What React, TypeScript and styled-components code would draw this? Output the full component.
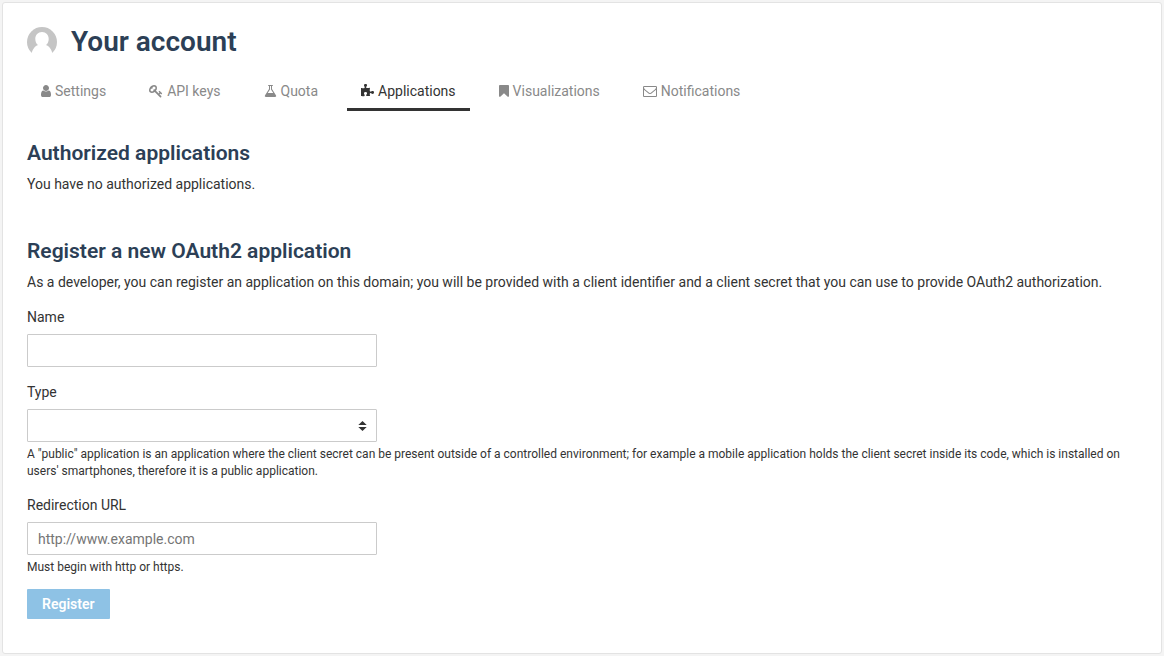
import React from 'react';
import styled, { createGlobalStyle, css } from 'styled-components';

const GlobalStyle = createGlobalStyle`
  *, *::before, *::after { box-sizing: border-box; }
  body {
    margin: 0;
    padding: 2px;
    background: #f4f4f4;
    color: #333;
    font-family: Roboto, "Liberation Sans", sans-serif;
    font-size: 14px;
    line-height: 20px;
  }
`;

const Card = styled.main`
  padding: 24px 24px 34px;
  background: #fff;
  border: 1px solid #e3e3e3;
  border-radius: 3px;
`;

const Header = styled.header`
  display: flex;
  align-items: center;
  gap: 14px;
`;

const Avatar = styled.svg`
  flex: none;
  width: 30px;
  height: 30px;
`;

const PageTitle = styled.h1`
  margin: 0;
  color: #2c3f56;
  font-size: 28px;
  font-weight: 600;
  line-height: 30px;
`;

const TabBar = styled.nav`
  display: flex;
  flex-wrap: wrap;
  gap: 15px;
  margin-top: 18px;
`;

const Tab = styled.a<{ $active?: boolean }>`
  display: flex;
  align-items: center;
  gap: 4px;
  padding: 6px 14px 7px;
  border-bottom: 3px solid ${(p) => (p.$active ? '#333' : 'transparent')};
  color: ${(p) => (p.$active ? '#333' : '#898989')};
  text-decoration: none;
`;

const Glyph = styled.svg`
  flex: none;
  height: 14px;
  fill: currentColor;
`;

const Section = styled.section`
  margin-top: 29px;

  & + & { margin-top: 44px; }
`;

const SectionTitle = styled.h2`
  margin: 0 0 8px;
  color: #2c3f56;
  font-size: 21px;
  font-weight: 600;
  line-height: 26px;
`;

const Text = styled.p`
  margin: 0;
`;

const Field = styled.div`
  margin-top: 15px;
`;

const Label = styled.label`
  display: block;
  margin-bottom: 7px;
`;

const control = css`
  display: block;
  width: 350px;
  max-width: 100%;
  height: 33px;
  padding: 0 10px;
  background: #fff;
  border: 1px solid #cbcbcb;
  border-radius: 1px;
  color: #333;
  font: inherit;
`;

const TextInput = styled.input`
  ${control}

  &::placeholder { color: #757575; opacity: 1; }
`;

const Select = styled.select`
  ${control}
  appearance: none;
`;

const SelectWrap = styled.div`
  position: relative;
  width: 350px;
  max-width: 100%;
`;

const SelectArrows = styled.svg`
  position: absolute;
  top: 12px;
  right: 10px;
  width: 9px;
  height: 10px;
  fill: #333;
  pointer-events: none;
`;

const Help = styled.p`
  margin: 4px 0 0;
  font-size: 12px;
  line-height: 17px;
`;

const Submit = styled.button`
  display: block;
  height: 30px;
  margin-top: 13px;
  padding: 0 15px;
  background: #8ec2e5;
  border: 0;
  border-radius: 1px;
  color: #fff;
  font: inherit;
  font-weight: 600;
`;

type TabItem = { label: string; width: number; box: string; path: string };

const tabs: TabItem[] = [
  {
    label: 'Settings',
    width: 10,
    box: '256 0 1280 1792',
    path: 'M1536 1399q0 109-62.5 187t-150.5 78h-854q-88 0-150.5-78t-62.5-187q0-85 8.5-160.5t31.5-152 58.5-131 94-89 134.5-34.5q131 128 313 128t313-128q76 0 134.5 34.5t94 89 58.5 131 31.5 152 8.5 160.5zm-256-887q0 159-112.5 271.5t-271.5 112.5-271.5-112.5-112.5-271.5 112.5-271.5 271.5-112.5 271.5 112.5 112.5 271.5z',
  },
  {
    label: 'API keys',
    width: 14,
    box: '0 0 1792 1792',
    path: 'M832 512q0-80-56-136t-136-56-136 56-56 136q0 42 19 83-41-19-83-19-80 0-136 56t-56 136 56 136 136 56 136-56 56-136q0-42-19-83 41 19 83 19 80 0 136-56t56-136zm851 704q0 17-49 66t-66 49q-9 0-28.5-16t-36.5-33-38.5-40-24.5-26l-96 96 220 220q28 28 28 68 0 42-39 81t-81 39q-40 0-68-28l-671-671q-176 131-365 131-163 0-265.5-102.5t-102.5-265.5q0-160 95-313t248-248 313-95q163 0 265.5 102.5t102.5 265.5q0 189-131 365l355 355 96-96q-3-3-26-24.5t-40-38.5-33-36.5-16-28.5q0-17 49-66t66-49q13 0 23 10 6 6 46 44.5t82 79.5 86.5 86 73 78 28.5 41z',
  },
  {
    label: 'Quota',
    width: 13,
    box: '64 0 1664 1792',
    path: 'M1591 1448q56 89 21.5 152.5t-140.5 63.5h-1152q-106 0-140.5-63.5t21.5-152.5l503-793v-399h-64q-26 0-45-19t-19-45 19-45 45-19h512q26 0 45 19t19 45-19 45-45 19h-64v399zm-779-725l-272 429h712l-272-429-20-31v-436h-128v436z',
  },
  {
    label: 'Applications',
    width: 13,
    box: '91 0 1664 1792',
    path: 'M1755 1082q0 81-44.5 135t-123.5 54q-41 0-77.5-17.5t-59-38-56.5-38-71-17.5q-110 0-110 124 0 39 16 115t15 115v5q-22 0-33 1-34 3-97.5 11.5t-115.5 13.5-98 5q-61 0-103-26.5t-42-83.5q0-37 17.5-71t38-56.5 38-59 17.5-77.5q0-79-54-123.5t-135-44.5q-84 0-143 45.5t-59 127.5q0 43 15 83t33.5 64.5 33.5 53 15 50.5q0 45-46 89-37 35-117 35-95 0-245-24-9-2-27.5-4t-27.5-4l-13-2q-1 0-3-1-2 0-2-1v-1024q2 1 17.5 3.5t34 5 21.5 3.5q150 24 245 24 80 0 117-35 46-44 46-89 0-22-15-50.5t-33.5-53-33.5-64.5-15-83q0-82 59-127.5t144-45.5q80 0 134 44.5t54 123.5q0 41-17.5 77.5t-38 59-38 56.5-17.5 71q0 57 42 83.5t103 26.5q64 0 180-15t163-17v2q-1 2-3.5 17.5t-5 34-3.5 21.5q-24 150-24 245 0 80 35 117 44 46 89 46 22 0 50.5-15t53-33.5 64.5-33.5 83-15q82 0 127.5 59t45.5 143z',
  },
  {
    label: 'Visualizations',
    width: 10,
    box: '256 0 1280 1792',
    path: 'M1420 128q23 0 44 9 33 13 52.5 41t19.5 62v1289q0 34-19.5 62t-52.5 41q-19 8-44 8-48 0-83-32l-441-424-441 424q-36 33-83 33-23 0-44-9-33-13-52.5-41t-19.5-62v-1289q0-34 19.5-62t52.5-41q21-9 44-9h1048z',
  },
  {
    label: 'Notifications',
    width: 14,
    box: '0 0 1792 1792',
    path: 'M1664 1504v-768q-32 36-69 66-268 206-426 338-51 43-83 67t-86.5 48.5-102.5 24.5h-2q-48 0-102.5-24.5t-86.5-48.5-83-67q-158-132-426-338-37-30-69-66v768q0 13 9.5 22.5t22.5 9.5h1472q13 0 22.5-9.5t9.5-22.5zm0-1051v-24.5l-.5-13-3-12.5-5.5-9-9-7.5-14-2.5h-1472q-13 0-22.5 9.5t-9.5 22.5q0 168 147 284 193 152 401 317 6 5 35 29.5t46 37.5 44.5 31.5 50.5 27.5 43 9h2q20 0 43-9t50.5-27.5 44.5-31.5 46-37.5 35-29.5q208-165 401-317 54-43 100.5-115.5t46.5-131.5zm128-37v1088q0 66-47 113t-113 47h-1472q-66 0-113-47t-47-113v-1088q0-66 47-113t113-47h1472q66 0 113 47t47 113z',
  },
];

export default function App() {
  return (
    <>
      <GlobalStyle />
      <Card>
        <Header>
          <Avatar viewBox="0 0 30 30" aria-hidden="true">
            <circle cx="15" cy="15" r="15" fill="#c5c5c5" />
            <path
              fill="#fff"
              d="M15 5c4 0 6.700 2.900 6.700 7 0 2.600-1 4.800-2.700 6.100 3 1.100 5 3.700 6.400 8L27 30H3l1.600-3.900c1.400-4.300 3.400-6.900 6.400-8-1.700-1.300-2.700-3.500-2.700-6.100 0-4.100 2.700-7 6.700-7z"
            />
          </Avatar>
          <PageTitle>Your account</PageTitle>
        </Header>

        <TabBar aria-label="Account">
          {tabs.map((tab) => {
            const active = tab.label === 'Applications';
            return (
              <Tab key={tab.label} href="#" $active={active} aria-current={active ? 'page' : undefined}>
                <Glyph viewBox={tab.box} width={tab.width} aria-hidden="true">
                  <path d={tab.path} />
                </Glyph>
                {tab.label}
              </Tab>
            );
          })}
        </TabBar>

        <Section>
          <SectionTitle>Authorized applications</SectionTitle>
          <Text>You have no authorized applications.</Text>
        </Section>

        <Section>
          <SectionTitle>Register a new OAuth2 application</SectionTitle>
          <Text>
            As a developer, you can register an application on this domain; you will be provided with a client
            identifier and a client secret that you can use to provide OAuth2 authorization.
          </Text>
          <form onSubmit={(e) => e.preventDefault()}>
            <Field>
              <Label htmlFor="app-name">Name</Label>
              <TextInput id="app-name" type="text" />
            </Field>
            <Field>
              <Label htmlFor="app-type">Type</Label>
              <SelectWrap>
                <Select id="app-type" defaultValue="">
                  <option value="" />
                </Select>
                <SelectArrows viewBox="0 0 9 10" aria-hidden="true">
                  <path d="M4.500 0 8.700 4H.3zM.3 6h8.400L4.500 10z" />
                </SelectArrows>
              </SelectWrap>
              <Help>
                A "public" application is an application where the client secret can be present outside of a
                controlled environment; for example a mobile application holds the client secret inside its code,
                which is installed on users' smartphones, therefore it is a public application.
              </Help>
            </Field>
            <Field>
              <Label htmlFor="app-url">Redirection URL</Label>
              <TextInput id="app-url" type="text" placeholder="http://www.example.com" />
              <Help>Must begin with http or https.</Help>
            </Field>
            <Submit type="submit">Register</Submit>
          </form>
        </Section>
      </Card>
    </>
  );
}
